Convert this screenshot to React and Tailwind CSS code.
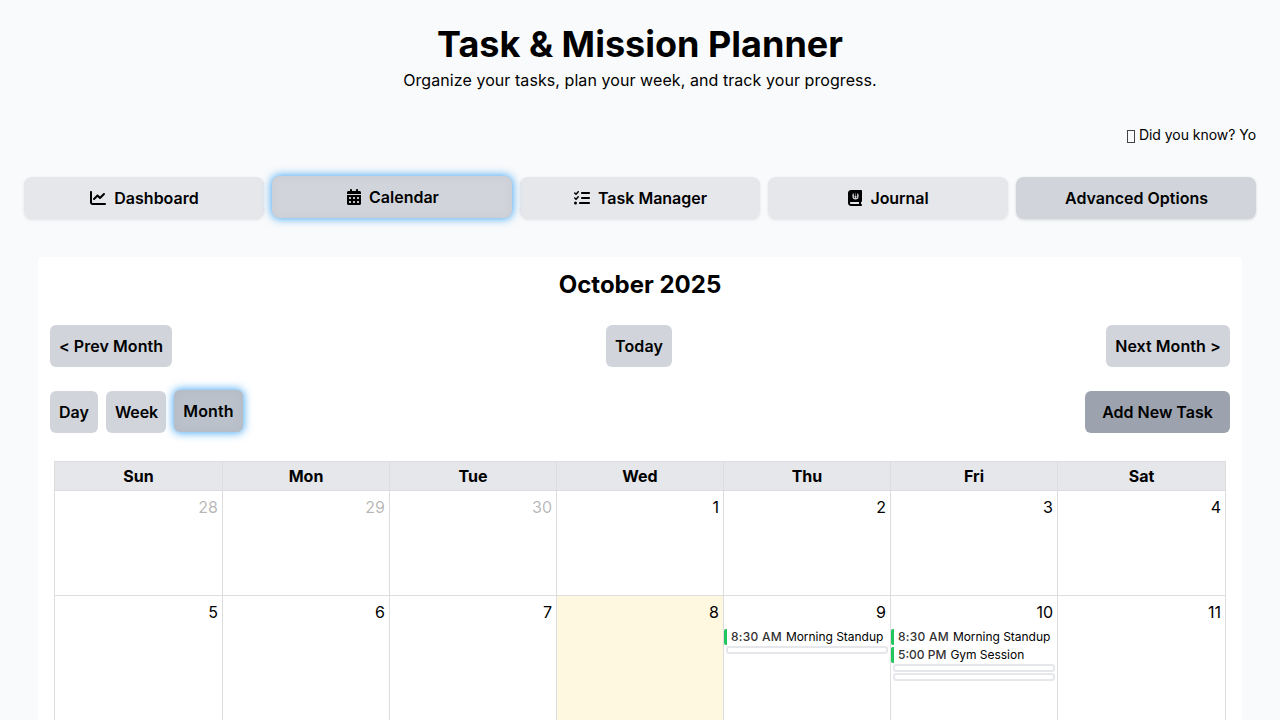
import { FaChartLine, FaCalendarDays, FaListCheck, FaBookJournalWhills } from 'react-icons/fa6';

const tabs = [
  { label: 'Dashboard', Icon: FaChartLine, spacing: 'pl-px' },
  { label: 'Calendar', Icon: FaCalendarDays, active: true, spacing: 'pl-px gap-[7px]' },
  { label: 'Task Manager', Icon: FaListCheck, spacing: 'pl-px' },
  { label: 'Journal', Icon: FaBookJournalWhills, spacing: 'gap-[7px] tracking-[-0.05px]' },
];

const weekdays = ['Sun', 'Mon', 'Tue', 'Wed', 'Thu', 'Fri', 'Sat'];

const standup = { time: '8:30 AM', title: 'Morning Standup', spacing: 'tracking-[0.25px]' };
const gym = { time: '5:00 PM', title: 'Gym Session', spacing: '' };

const weeks = [
  [
    { day: 28, other: true },
    { day: 29, other: true },
    { day: 30, other: true },
    { day: 1 },
    { day: 2 },
    { day: 3 },
    { day: 4 },
  ],
  [
    { day: 5 },
    { day: 6 },
    { day: 7 },
    { day: 8, today: true },
    { day: 9, events: [standup] },
    { day: 10, events: [standup, gym] },
    { day: 11 },
  ],
];

const columns = 'grid grid-cols-[168px_repeat(5,167px)_168px]';

const glow =
  '-translate-y-px shadow-[0_0_8px_1px_rgba(33,150,243,0.8),inset_0_0_8px_rgba(150,150,150,0.15)]';

function Button({ children, className = '' }) {
  return (
    <button
      className={`h-[42px] rounded-md text-center text-base font-semibold whitespace-nowrap ${className}`}
    >
      {children}
    </button>
  );
}

function DayCell({ day, other, today, events = [] }) {
  return (
    <div className={`border-r border-b border-[#ddd] ${today ? 'bg-[#fff8e1]' : ''}`}>
      <div className={`pt-1 pr-1 text-right leading-6 ${other ? 'text-black/30' : ''}`}>{day}</div>
      <div className="mt-[5px]">
        {events.map((event) => (
          <div
            key={event.title}
            className="mb-0.5 flex h-4 items-center gap-1 rounded-[2px] border-l-[3px] border-[#22c55e] pl-1 text-[12px] whitespace-nowrap"
          >
            <span className={`font-medium text-[#333] ${event.spacing}`}>{event.time}</span>
            <span className="tracking-[-0.03px]">{event.title}</span>
          </div>
        ))}
        <div className="-mt-px">
          {events.map((event) => (
            <div key={event.title} className="mx-0.5 mb-px h-2 rounded-[3px] border-2 border-gray-200" />
          ))}
        </div>
      </div>
    </div>
  );
}

export default function App() {
  return (
    <div className="h-screen overflow-hidden bg-[#f9fafb] px-6 pt-6 font-['Inter',sans-serif] text-base text-black">
      <header className="text-center">
        <h1 className="text-4xl font-bold">Task &amp; Mission Planner</h1>
        <p className="mt-1 tracking-[0.07px]">
          Organize your tasks, plan your week, and track your progress.
        </p>
      </header>

      <div className="mt-8 flex h-[21px] items-center justify-end overflow-hidden text-sm leading-[21px] whitespace-nowrap">
        <span className="mt-[3px] mr-[4px] h-[13px] w-2 border border-[#444]" />
        <span className="tracking-[-0.04px]">Did you know? Yo</span>
      </div>

      <nav className="mt-8 grid grid-cols-5 gap-2">
        {tabs.map(({ label, Icon, active, spacing }) => (
          <button
            key={label}
            className={`flex h-[42px] items-center justify-center rounded-lg font-semibold ${
              spacing.includes('gap') ? '' : 'gap-2'
            } ${spacing} ${
              active ? `bg-[#d1d5db] ${glow}` : 'bg-[#e5e7eb] shadow-[0_1px_3px_rgba(0,0,0,0.1)]'
            }`}
          >
            <Icon className="h-4 w-auto" />
            {label}
          </button>
        ))}
        <button className="h-[42px] rounded-lg bg-[#d1d5db] pl-px font-semibold shadow-[0_1px_3px_rgba(0,0,0,0.15)]">
          Advanced Options
        </button>
      </nav>

      <main className="mx-[14px] mt-[38px] rounded bg-white px-3 pt-3">
        <h2 className="text-center text-2xl font-bold">October 2025</h2>

        <div className="mt-6 flex justify-between">
          <Button className="w-[122px] bg-[#d1d5db] tracking-[0.06px]">&lt; Prev Month</Button>
          <Button className="w-[66px] bg-[#d1d5db] tracking-[0.1px]">Today</Button>
          <Button className="w-[124px] bg-[#d1d5db] tracking-[0.06px]">Next Month &gt;</Button>
        </div>

        <div className="mt-6 flex justify-between">
          <div className="flex gap-2">
            <Button className="w-12 bg-[#d1d5db]">Day</Button>
            <Button className="w-[60px] bg-[#d1d5db] pl-px tracking-[-0.1px]">Week</Button>
            <Button className={`w-[69px] bg-[#bac1cb] tracking-[0.15px] ${glow}`}>Month</Button>
          </div>
          <Button className="w-[145px] bg-[#9ca3af]">Add New Task</Button>
        </div>

        <div className="mx-1 mt-7 border-t border-l border-[#ddd]">
          <div className={`h-[29px] bg-[#e5e7eb] ${columns}`}>
            {weekdays.map((name) => (
              <div key={name} className="border-r border-b border-[#ddd] pt-0.5 text-center font-bold">
                {name}
              </div>
            ))}
          </div>
          {weeks.map((week) => (
            <div key={week[0].day} className={`h-[105px] last:h-[140px] ${columns}`}>
              {week.map((cell) => (
                <DayCell key={cell.day} {...cell} />
              ))}
            </div>
          ))}
        </div>
      </main>
    </div>
  );
}
